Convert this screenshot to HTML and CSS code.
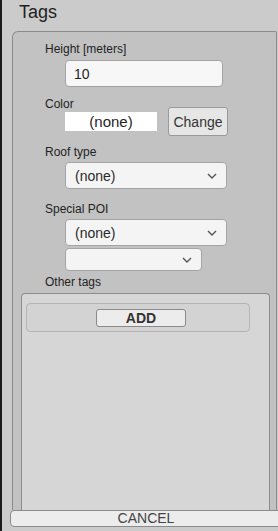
FILE: index.html
```html
<!DOCTYPE html>
<html lang="en">
<head>
    <meta charset="UTF-8">
    <meta name="viewport" content="width=device-width, initial-scale=1.0">
    <title>Tags</title>
    <link rel="stylesheet" href="styles.css">
</head>
<body>

    <div class="window">
        <h1 class="title">Tags</h1>

        <div class="panel">
            <label class="label label-height">Height [meters]</label>
            <input class="text-field" type="text" value="10">

            <label class="label label-color">Color</label>
            <div class="color-row">
                <div class="swatch">(none)</div>
                <button class="button change-btn">Change</button>
            </div>

            <label class="label label-roof">Roof type</label>
            <div class="dropdown">
                <span>(none)</span>
                <svg class="chevron" width="10" height="6" viewBox="0 0 10 6"><path d="M1 1 L5 5 L9 1" fill="none" stroke="#555" stroke-width="1.4"/></svg>
            </div>

            <label class="label label-poi">Special POI</label>
            <div class="dropdown">
                <span>(none)</span>
                <svg class="chevron" width="10" height="6" viewBox="0 0 10 6"><path d="M1 1 L5 5 L9 1" fill="none" stroke="#555" stroke-width="1.4"/></svg>
            </div>
            <div class="dropdown dropdown-small">
                <span></span>
                <svg class="chevron" width="10" height="6" viewBox="0 0 10 6"><path d="M1 1 L5 5 L9 1" fill="none" stroke="#555" stroke-width="1.4"/></svg>
            </div>

            <label class="label label-other">Other tags</label>
            <div class="tags-box">
                <div class="add-row">
                    <button class="button add-btn">ADD</button>
                </div>
            </div>
        </div>

        <button class="button cancel-btn">CANCEL</button>
    </div>

</body>
</html>
```

FILE: styles.css
```css
body {
    margin: 0;
    background-color: #1c1c1c;
    font-family: "Liberation Sans", Arial, sans-serif;
    color: #222;
    overflow: hidden;
}

.window {
    margin-left: 2px;
    height: 531px;
    background-color: #cbcbcb;
    display: flex;
    flex-direction: column;
    overflow: hidden;
}

.title {
    margin: 1px 0 0 17px;
    font-size: 18px;
    font-weight: normal;
    line-height: 22px;
    color: #1f1f1f;
}

.panel {
    flex: 1;
    margin: 8px 0 0 10px;
    width: 265px;
    padding: 10px 0 0 32px;
    box-sizing: border-box;
    background-color: #c2c2c2;
    border: 1px solid #8c8c8c;
    border-bottom: none;
    border-top-left-radius: 6px;
    border-top-right-radius: 2px;
    display: flex;
    flex-direction: column;
    align-items: flex-start;
}

.label {
    display: block;
    font-size: 12px;
    line-height: 14px;
    color: #222;
}

.label-color { margin-top: 10px; }
.label-roof { margin-top: 9px; }
.label-poi { margin-top: 13px; }
.label-other { margin-top: 4px; }

.text-field {
    margin: 4px 0 0 20px;
    width: 158px;
    height: 27px;
    box-sizing: border-box;
    padding: 0 8px;
    border: 1px solid #a4a4a4;
    border-radius: 4px;
    background-color: #f7f7f7;
    font-family: inherit;
    font-size: 14px;
    color: #1f1f1f;
    outline: none;
}

.color-row {
    margin: -4px 0 0 20px;
    display: flex;
    align-items: center;
    gap: 11px;
}

.swatch {
    width: 92px;
    height: 19px;
    background-color: #fff;
    font-size: 15px;
    line-height: 19px;
    text-align: center;
    color: #1f1f1f;
}

.button {
    font-family: inherit;
    box-sizing: border-box;
    border: 1px solid #999;
    border-radius: 3px;
    background-color: #e4e4e4;
    color: #333;
    padding: 0;
    cursor: pointer;
}

.change-btn {
    width: 60px;
    height: 29px;
    font-size: 14px;
    border-color: #9a9a9a;
    background-color: #e6e6e6;
}

.dropdown {
    margin: 3px 0 0 20px;
    width: 162px;
    height: 27px;
    box-sizing: border-box;
    padding: 0 9px 0 9px;
    border: 1px solid #a4a4a4;
    border-radius: 4px;
    background-color: #f4f4f4;
    display: flex;
    align-items: center;
    justify-content: space-between;
    font-size: 14px;
    color: #2a2a2a;
}

.dropdown-small {
    margin-top: 2px;
    width: 137px;
    height: 23px;
}

.tags-box {
    flex: 1;
    align-self: stretch;
    margin: 4px 0 0 -24px;
    width: 249px;
    box-sizing: border-box;
    padding: 9px 0 0 4px;
    background-color: #d6d6d6;
    border: 1px solid #8c8c8c;
    border-bottom: none;
    border-radius: 4px 4px 0 0;
}

.add-row {
    width: 224px;
    height: 29px;
    box-sizing: border-box;
    padding: 5px 0 0 69px;
    border: 1px solid #b4b4b4;
    border-radius: 4px;
    background-color: #d3d3d3;
}

.add-btn {
    display: block;
    width: 90px;
    height: 18px;
    font-size: 14px;
    font-weight: bold;
    line-height: 16px;
    background-color: #ececec;
    border-color: #8a8a8a;
    color: #333;
}

.cancel-btn {
    margin: 0 -4px 4px 8px;
    height: 17px;
    font-size: 14px;
    line-height: 15px;
    color: #444;
    background-color: #ececec;
    border-color: #8a8a8a;
    border-radius: 4px 0 0 4px;
}
```
